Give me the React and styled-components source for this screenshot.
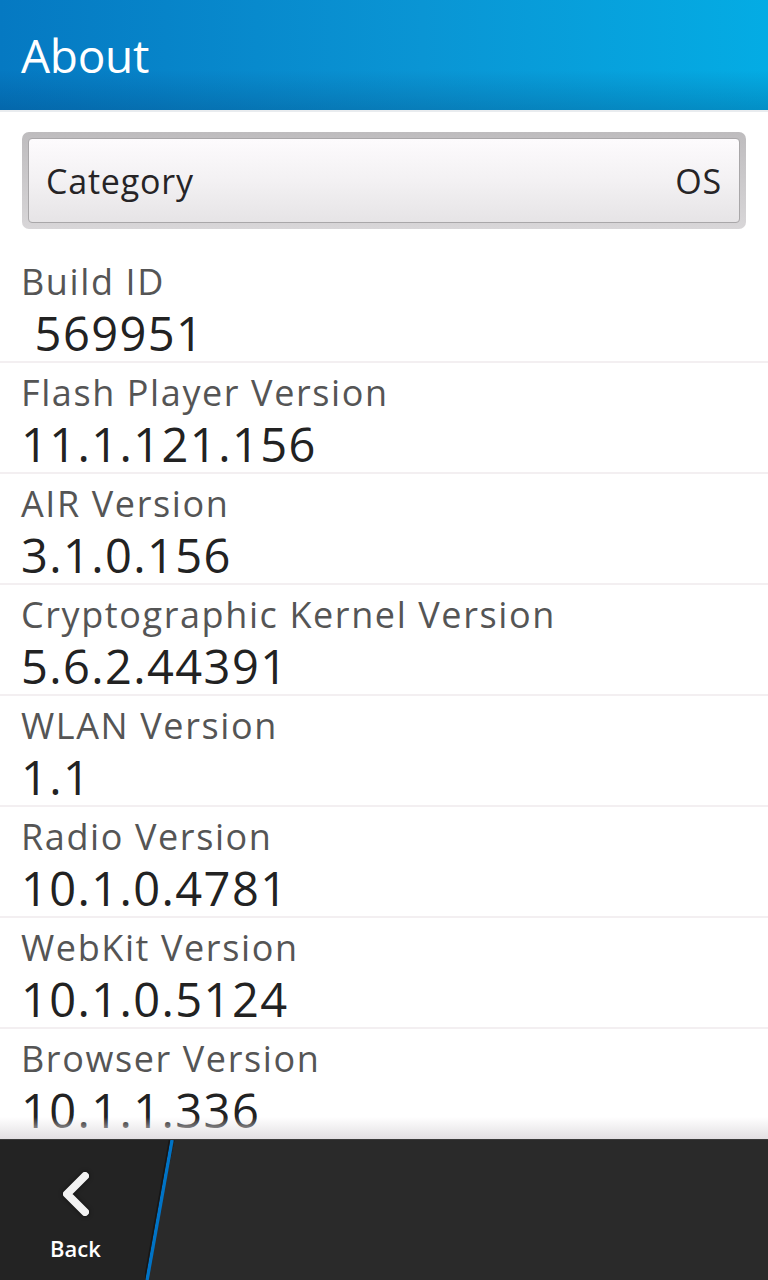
import React from "react";
import styled, { createGlobalStyle } from "styled-components";

const GlobalStyle = createGlobalStyle`
  html, body {
    margin: 0;
    padding: 0;
    background: #ffffff;
  }
  body {
    font-family: "Open Sans", sans-serif;
  }
`;

const items = [
  { label: "Build ID", value: " 569951" },
  { label: "Flash Player Version", value: "11.1.121.156" },
  { label: "AIR Version", value: "3.1.0.156" },
  { label: "Cryptographic Kernel Version", value: "5.6.2.44391" },
  { label: "WLAN Version", value: "1.1" },
  { label: "Radio Version", value: "10.1.0.4781" },
  { label: "WebKit Version", value: "10.1.0.5124" },
  { label: "Browser Version", value: "10.1.1.336" },
];

const App = () => {
  return (
    <Screen>
      <GlobalStyle />
      <TitleBar>
        <h1>About</h1>
      </TitleBar>
      <Content>
        <DropDown>
          <DropButton>
            <span>Category</span>
            <span>OS</span>
          </DropButton>
        </DropDown>
        <List>
          {items.map((item) => (
            <Row key={item.label}>
              <Label>{item.label}</Label>
              <Value>{item.value}</Value>
            </Row>
          ))}
        </List>
      </Content>
      <ActionBar>
        <BackButton>
          <svg width="40" height="50" viewBox="0 0 40 50">
            <path
              d="M29 7 L11 25 L29 43"
              fill="none"
              stroke="#f2f2f2"
              strokeWidth="8"
              strokeLinecap="round"
              strokeLinejoin="round"
            />
          </svg>
          <span>Back</span>
        </BackButton>
        <Divider>
          <svg width="30" height="140" viewBox="0 0 30 140">
            <line x1="27" y1="0" x2="2" y2="140" stroke="#0073c6" strokeWidth="3.5" />
            <line x1="24.5" y1="0" x2="-0.5" y2="140" stroke="#161616" strokeWidth="1.5" />
          </svg>
        </Divider>
        <Filler />
      </ActionBar>
    </Screen>
  );
};

export default App;

const Screen = styled.div`
  width: 768px;
  height: 1280px;
  display: flex;
  flex-direction: column;
  overflow: hidden;
`;

const TitleBar = styled.header`
  height: 110px;
  flex-shrink: 0;
  display: flex;
  align-items: center;
  padding-left: 21px;
  background: linear-gradient(90deg, #0579c2 0%, #0a95d4 55%, #04ace4 100%);
  position: relative;
  border-bottom: 2px solid #e9ecef;
  &::after {
    content: "";
    position: absolute;
    left: 0;
    right: 0;
    bottom: 0;
    height: 40px;
    background: linear-gradient(180deg, rgba(0, 40, 90, 0) 0%, rgba(0, 40, 90, 0.22) 100%);
  }
  h1 {
    margin: 0;
    color: #ffffff;
    font-family: "Open Sans", sans-serif;
    font-weight: 400;
    font-size: 46px;
    letter-spacing: -0.3px;
    position: relative;
    z-index: 1;
  }
`;

const Content = styled.main`
  flex: 1;
  overflow: hidden;
  position: relative;
  padding-top: 20px;
  &::after {
    content: "";
    position: absolute;
    left: 0;
    right: 0;
    bottom: 0;
    height: 22px;
    background: linear-gradient(180deg, rgba(230, 226, 230, 0) 0%, #e2dfe2 100%);
  }
`;

const DropDown = styled.div`
  margin: 0 22px;
  height: 97px;
  box-sizing: border-box;
  border-radius: 7px;
  padding: 6px;
  background: linear-gradient(180deg, #bebcbe 0%, #d8d6d8 100%);
`;

const DropButton = styled.div`
  height: 100%;
  box-sizing: border-box;
  border: 1px solid #a9a7a9;
  border-radius: 4px;
  background: linear-gradient(180deg, #fdfbfd 0%, #f3f1f3 50%, #e6e4e6 100%);
  display: flex;
  align-items: center;
  justify-content: space-between;
  padding: 0 17px;
  font-family: "Open Sans", sans-serif;
  font-size: 34px;
  letter-spacing: 0.8px;
  color: #262426;
`;

const List = styled.div`
  margin-top: 23px;
`;

const Row = styled.div`
  height: 111px;
  box-sizing: border-box;
  border-bottom: 2px solid #f3eff1;
  padding: 5px 0 0 21px;
`;

const Label = styled.div`
  font-size: 36px;
  line-height: 50px;
  letter-spacing: 1.6px;
  color: #555555;
`;

const Value = styled.div`
  font-size: 47px;
  line-height: 52px;
  letter-spacing: 1.4px;
  color: #222222;
  white-space: pre;
`;

const ActionBar = styled.footer`
  height: 140px;
  flex-shrink: 0;
  display: flex;
  background: #2a2a2a;
  border-top: 1px solid #3a3a3a;
`;

const BackButton = styled.div`
  width: 145px;
  flex-shrink: 0;
  background: #232323;
  display: flex;
  flex-direction: column;
  align-items: center;
  padding-top: 29px;
  padding-left: 6px;
  box-sizing: border-box;
  svg {
    filter: drop-shadow(0 0 2px rgba(0, 0, 0, 0.6));
  }
  span {
    margin-top: 14px;
    color: #ffffff;
    font-family: "Open Sans", sans-serif;
    font-weight: 600;
    font-size: 22px;
  }
`;

const Divider = styled.div`
  width: 30px;
  flex-shrink: 0;
  background: linear-gradient(to right bottom, #232323 50%, #2a2a2a 50%);
  svg {
    display: block;
  }
`;

const Filler = styled.div`
  flex: 1;
`;
